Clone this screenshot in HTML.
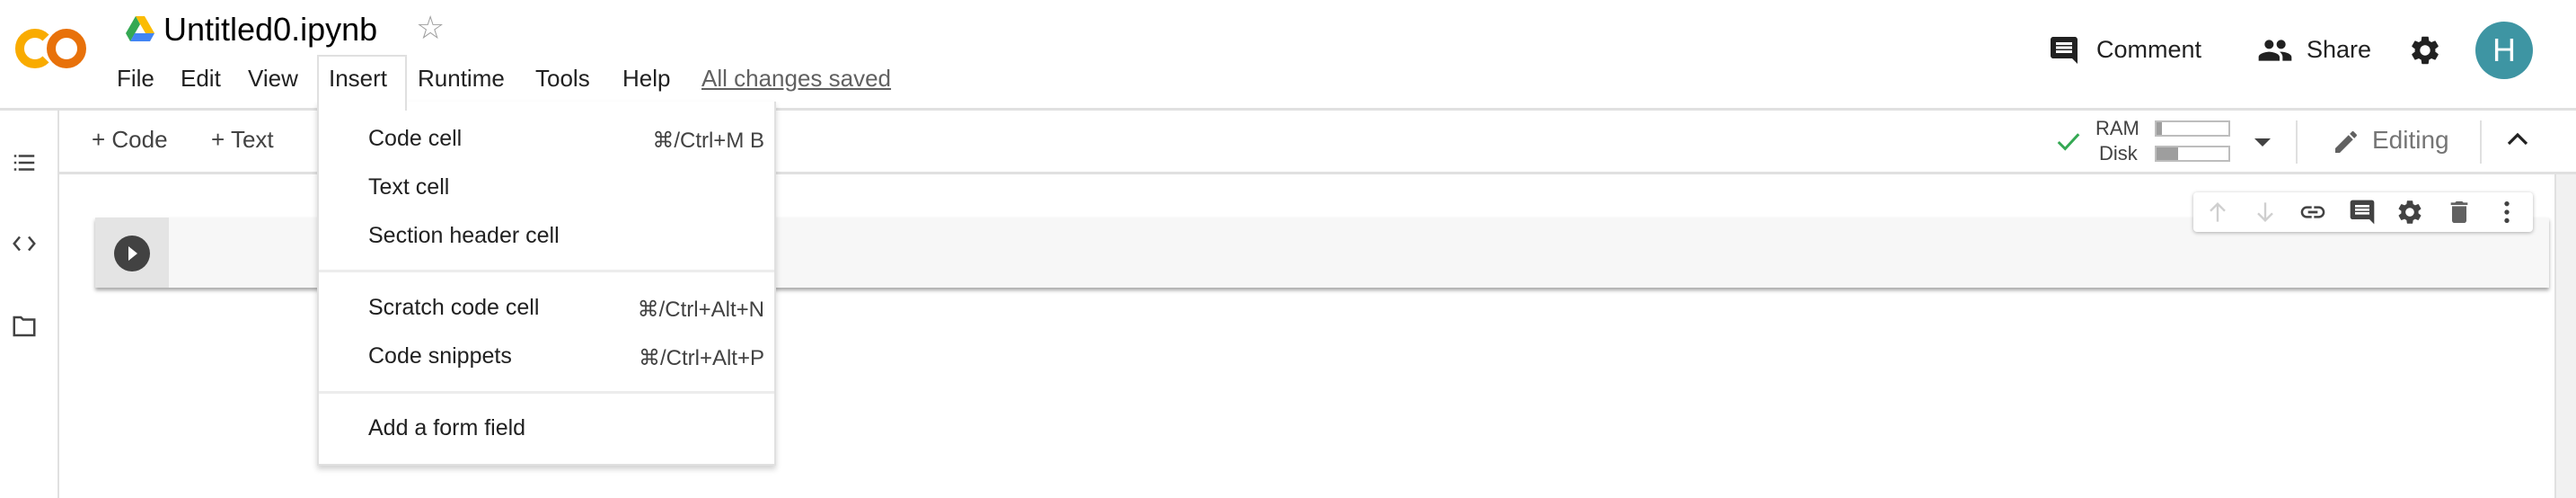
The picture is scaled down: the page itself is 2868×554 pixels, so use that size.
<!DOCTYPE html>
<html><head><meta charset="utf-8"><style>
*{margin:0;padding:0;box-sizing:border-box}
body{width:2868px;height:554px;overflow:hidden;background:#fff;font-family:"Liberation Sans",Arial,sans-serif;color:#212121;position:relative}
.a{position:absolute;white-space:nowrap}
.menu{font-size:26px;top:72px;color:#212121}
.mi{font-size:25px;left:410px;color:#212121}
.sc{font-size:24px;left:651px;width:200px;text-align:right;color:#424242}
svg{position:absolute}
</style></head><body>
<div class="a" style="left:0;top:120px;width:2868px;height:3px;background:#e0e0e0"></div>
<svg style="left:14px;top:28px" width="86" height="52" viewBox="0 0 86 52">
<circle cx="60" cy="26" r="17" fill="none" stroke="#e8710a" stroke-width="10"/>
<path d="M37 14 A17 17 0 1 0 37 38" fill="none" stroke="#f9ab00" stroke-width="10"/>
</svg>
<svg style="left:140px;top:18px" width="32" height="28" viewBox="0 0 32 28">
<path d="M11 0h10l11 19h-10z" fill="#fbbc04"/><path d="M11 0l-11 19 5 9 11-19z" fill="#34a853"/><path d="M5 28h22l5-9H10z" fill="#4285f4"/>
</svg>
<div class="a" style="left:182px;top:12px;font-size:36px;color:#000">Untitled0.ipynb</div>
<div class="a" style="left:463px;top:10px;font-size:36px;color:#9e9e9e">☆</div>
<div class="a menu" style="left:130px">File</div>
<div class="a menu" style="left:201px">Edit</div>
<div class="a menu" style="left:276px">View</div>
<div class="a" style="left:353px;top:61px;width:100px;height:62px;background:#fff;border:2px solid #e0e0e0;border-bottom:none;z-index:3"></div>
<div class="a menu" style="left:366px;z-index:4">Insert</div>
<div class="a menu" style="left:465px">Runtime</div>
<div class="a menu" style="left:596px">Tools</div>
<div class="a menu" style="left:693px">Help</div>
<div class="a menu" style="left:781px;color:#616161;text-decoration:underline">All changes saved</div>
<svg style="left:2280px;top:38px" width="36" height="36" viewBox="0 0 24 24"><path d="M21.99 4c0-1.1-.89-2-1.99-2H4c-1.1 0-2 .9-2 2v12c0 1.1.9 2 2 2h14l4 4-.01-18zM18 14H6v-2h12v2zm0-3H6V9h12v2zm0-3H6V6h12v2z" fill="#212121"/></svg>
<div class="a" style="left:2334px;top:40px;font-size:27px">Comment</div>
<svg style="left:2513px;top:36px" width="40" height="40" viewBox="0 0 24 24"><path d="M16 11c1.66 0 2.99-1.340 2.99-3S17.66 5 16 5c-1.66 0-3 1.34-3 3s1.34 3 3 3zm-8 0c1.66 0 2.99-1.34 2.99-3S9.66 5 8 5C6.34 5 5 6.34 5 8s1.34 3 3 3zm0 2c-2.33 0-7 1.17-7 3.5V19h14v-2.5c0-2.33-4.670-3.5-7-3.5zm8 0c-.29 0-.62.02-.97.05 1.16.84 1.97 1.97 1.97 3.45V19h6v-2.5c0-2.33-4.67-3.5-7-3.5z" fill="#212121"/></svg>
<div class="a" style="left:2568px;top:40px;font-size:27px">Share</div>
<svg style="left:2681px;top:37px" width="38" height="38" viewBox="0 0 24 24"><path d="M19.14 12.94c.04-.3.06-.61.06-.94 0-.32-.02-.64-.07-.94l2.03-1.58a.49.49 0 0 0 .12-.61l-1.92-3.32a.488.488 0 0 0-.59-.22l-2.390.96c-.5-.38-1.03-.7-1.62-.94l-.36-2.54a.484.484 0 0 0-.48-.41h-3.84c-.24 0-.43.17-.47.41l-.36 2.54c-.59.24-1.13.57-1.62.94l-2.39-.96c-.22-.08-.47 0-.59.22L2.74 8.87c-.12.21-.08.47.12.61l2.03 1.58c-.05.3-.09.63-.09.94s.02.64.07.94l-2.03 1.58a.49.49 0 0 0-.12.61l1.92 3.32c.12.22.37.29.59.22l2.39-.96c.5.38 1.03.7 1.62.94l.36 2.54c.05.24.24.41.48.41h3.84c.24 0 .44-.17.47-.41l.36-2.54c.59-.24 1.13-.56 1.62-.94l2.39.96c.22.08.47 0 .59-.22l1.92-3.32c.12-.22.07-.47-.12-.61l-2.01-1.58zM12 15.6c-1.98 0-3.6-1.62-3.6-3.6s1.62-3.6 3.6-3.6 3.6 1.62 3.6 3.6-1.62 3.6-3.6 3.6z" fill="#212121"/></svg>
<div class="a" style="left:2756px;top:24px;width:64px;height:64px;border-radius:50%;background:#3e95a3;color:#fff;font-size:36px;text-align:center;line-height:64px">H</div>
<div class="a" style="left:64px;top:123px;width:2px;height:431px;background:#e0e0e0"></div>
<svg style="left:12px;top:166px" width="30" height="30" viewBox="0 0 24 24"><path d="M3 5h2v2H3zm4 0h14v2H7zM3 11h2v2H3zm4 0h14v2H7zM3 17h2v2H3zm4 0h14v2H7z" fill="#424242"/></svg>
<svg style="left:12px;top:258px" width="30" height="26" viewBox="0 0 24 20"><path d="M8 4L3 10l5 6M16 4l5 6-5 6" fill="none" stroke="#424242" stroke-width="2"/></svg>
<svg style="left:12px;top:348px" width="30" height="30" viewBox="0 0 24 24"><path d="M3 4h6l2 2h10v14H3z" fill="none" stroke="#424242" stroke-width="2"/></svg>
<div class="a" style="left:66px;top:191px;width:2802px;height:3px;background:#e0e0e0"></div>
<div class="a" style="left:102px;top:140px;font-size:26px;color:#424242">+ Code</div>
<div class="a" style="left:235px;top:140px;font-size:26px;color:#424242">+ Text</div>
<svg style="left:2288px;top:143px" width="30" height="30" viewBox="0 0 24 24"><path d="M3 12l6 6L21 5" fill="none" stroke="#34a853" stroke-width="2.4"/></svg>
<div class="a" style="left:2333px;top:130px;font-size:22px;color:#424242">RAM</div>
<div class="a" style="left:2337px;top:158px;font-size:22px;color:#424242">Disk</div>
<div class="a" style="left:2399px;top:134px;width:84px;height:18px;border:2px solid #bdbdbd"><div style="width:6px;height:14px;background:#9e9e9e"></div></div>
<div class="a" style="left:2399px;top:162px;width:84px;height:18px;border:2px solid #bdbdbd"><div style="width:24px;height:14px;background:#9e9e9e"></div></div>
<div class="a" style="left:2510px;top:154px;width:0;height:0;border-left:9px solid transparent;border-right:9px solid transparent;border-top:9px solid #424242"></div>
<div class="a" style="left:2556px;top:134px;width:2px;height:48px;background:#e0e0e0"></div>
<svg style="left:2596px;top:142px" width="32" height="32" viewBox="0 0 24 24"><path d="M3 17.25V21h3.75L17.81 9.94l-3.75-3.75L3 17.25zM20.71 7.04a1 1 0 0 0 0-1.41l-2.34-2.34a1 1 0 0 0-1.41 0l-1.83 1.83 3.75 3.75 1.83-1.83z" fill="#616161"/></svg>
<div class="a" style="left:2641px;top:140px;font-size:28px;color:#757575">Editing</div>
<div class="a" style="left:2761px;top:134px;width:2px;height:48px;background:#e0e0e0"></div>
<svg style="left:2790px;top:144px" width="26" height="22" viewBox="0 0 26 22"><path d="M3 16l10-10 10 10" fill="none" stroke="#212121" stroke-width="3.2"/></svg>
<div class="a" style="left:2844px;top:194px;width:24px;height:360px;background:#f1f1f1;border-left:2px solid #e0e0e0"></div>
<div class="a" style="left:106px;top:242px;width:2732px;height:78px;background:#f7f7f7;box-shadow:0 3px 4px rgba(0,0,0,.35)"></div>
<div class="a" style="left:106px;top:242px;width:82px;height:78px;background:#e4e4e4"></div>
<div class="a" style="left:127px;top:262px;width:40px;height:40px;border-radius:50%;background:#424242"></div>
<div class="a" style="left:143px;top:274px;width:0;height:0;border-top:8px solid transparent;border-bottom:8px solid transparent;border-left:10px solid #fff"></div>
<div class="a" style="left:2442px;top:214px;width:378px;height:44px;background:#fff;border-radius:4px;box-shadow:0 1px 4px rgba(0,0,0,.3)"></div>
<svg style="left:2453px;top:220px" width="32" height="32" viewBox="0 0 24 24"><path d="M12 20V5M6 11l6-6 6 6" fill="none" stroke="#cfcfcf" stroke-width="1.8"/></svg>
<svg style="left:2506px;top:220px" width="32" height="32" viewBox="0 0 24 24"><path d="M12 4v15M6 13l6 6 6-6" fill="none" stroke="#cfcfcf" stroke-width="1.8"/></svg>
<svg style="left:2559px;top:220px" width="32" height="32" viewBox="0 0 24 24"><path d="M3.9 12c0-1.71 1.39-3.1 3.1-3.1h4V7H7c-2.76 0-5 2.24-5 5s2.24 5 5 5h4v-1.9H7c-1.71 0-3.1-1.39-3.1-3.1zM8 13h8v-2H8v2zm9-6h-4v1.9h4c1.71 0 3.1 1.39 3.1 3.1s-1.39 3.1-3.1 3.1h-4V17h4c2.76 0 5-2.24 5-5s-2.24-5-5-5z" fill="#424242"/></svg>
<svg style="left:2614px;top:220px" width="32" height="32" viewBox="0 0 24 24"><path d="M21.99 4c0-1.1-.89-2-1.99-2H4c-1.1 0-2 .9-2 2v12c0 1.1.9 2 2 2h14l4 4-.01-18zM18 14H6v-2h12v2zm0-3H6V9h12v2zm0-3H6V6h12v2z" fill="#424242"/></svg>
<svg style="left:2667px;top:220px" width="32" height="32" viewBox="0 0 24 24"><path d="M19.14 12.94c.04-.3.06-.61.06-.94 0-.32-.02-.64-.07-.94l2.03-1.58a.49.49 0 0 0 .12-.61l-1.92-3.32a.488.488 0 0 0-.59-.22l-2.39.96c-.5-.38-1.03-.7-1.62-.94l-.36-2.54a.484.484 0 0 0-.48-.41h-3.84c-.24 0-.43.17-.47.41l-.36 2.54c-.59.24-1.13.57-1.62.94l-2.39-.96c-.22-.08-.47 0-.59.22L2.74 8.87c-.12.21-.08.47.12.61l2.03 1.58c-.05.3-.09.63-.09.94s.02.64.07.94l-2.03 1.58a.49.49 0 0 0-.12.61l1.92 3.32c.12.22.37.29.59.22l2.39-.96c.5.38 1.03.7 1.62.94l.36 2.54c.05.24.24.41.48.41h3.84c.24 0 .44-.17.47-.41l.36-2.54c.59-.24 1.13-.56 1.62-.94l2.39.96c.22.08.47 0 .59-.22l1.92-3.32c.12-.22.07-.47-.12-.61l-2.01-1.58zM12 15.6c-1.98 0-3.6-1.62-3.6-3.6s1.62-3.6 3.6-3.6 3.6 1.62 3.6 3.6-1.62 3.6-3.6 3.6z" fill="#424242"/></svg>
<svg style="left:2722px;top:220px" width="32" height="32" viewBox="0 0 24 24"><path d="M6 19c0 1.1.9 2 2 2h8c1.1 0 2-.9 2-2V7H6v12zM19 4h-3.5l-1-1h-5l-1 1H5v2h14V4z" fill="#616161"/></svg>
<svg style="left:2775px;top:220px" width="32" height="32" viewBox="0 0 24 24"><circle cx="12" cy="5" r="2" fill="#424242"/><circle cx="12" cy="12" r="2" fill="#424242"/><circle cx="12" cy="19" r="2" fill="#424242"/></svg>
<div class="a" style="left:353px;top:113px;width:511px;height:405px;background:#fff;border:2px solid #e0e0e0;border-top:none;box-shadow:0 4px 6px rgba(0,0,0,.18);z-index:2">
<div class="a" style="left:0;top:187px;width:507px;height:3px;background:#ececec"></div>
<div class="a" style="left:0;top:322px;width:507px;height:3px;background:#ececec"></div>
</div>
<div class="a mi" style="top:140px;z-index:5">Code cell</div>
<div class="a sc" style="top:142px;z-index:5">⌘/Ctrl+M B</div>
<div class="a mi" style="top:194px;z-index:5">Text cell</div>
<div class="a mi" style="top:248px;z-index:5">Section header cell</div>
<div class="a mi" style="top:328px;z-index:5">Scratch code cell</div>
<div class="a sc" style="top:330px;z-index:5">⌘/Ctrl+Alt+N</div>
<div class="a mi" style="top:382px;z-index:5">Code snippets</div>
<div class="a sc" style="top:384px;z-index:5">⌘/Ctrl+Alt+P</div>
<div class="a mi" style="top:462px;z-index:5">Add a form field</div>
</body></html>
